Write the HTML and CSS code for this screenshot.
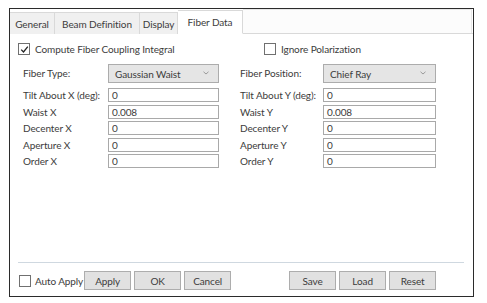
FILE: index.html
```html
<!DOCTYPE html>
<html>
<head>
<meta charset="utf-8">
<link rel="stylesheet" href="styles.css">
</head>
<body>
<div class="window">
  <div class="tabs">
    <div class="tab t-general">General</div>
    <div class="tab t-beam">Beam Definition</div>
    <div class="tab t-display">Display</div>
    <div class="tab active t-fiber">Fiber Data</div>
    <div class="tab-fill"></div>
  </div>
  <div class="content">
    <div class="checks">
      <label class="check c-compute"><span class="box checked"><svg width="9" height="9" viewBox="0 0 9 9"><path d="M1.2 4.6 L3.5 7 L7.8 1.6" fill="none" stroke="#222" stroke-width="1.3"/></svg></span>Compute Fiber Coupling Integral</label>
      <label class="check c-ignore"><span class="box"></span>Ignore Polarization</label>
    </div>
    <div class="fields">
      <div class="lbl">Fiber Type:</div>
      <div class="select">Gaussian Waist<svg class="arrow" width="6" height="4" viewBox="0 0 6 4"><path d="M0.5 0.8 L3 3 L5.5 0.8" fill="none" stroke="#999" stroke-width="1"/></svg></div>
      <div class="lbl r">Fiber Position:</div>
      <div class="select">Chief Ray<svg class="arrow" width="6" height="4" viewBox="0 0 6 4"><path d="M0.5 0.8 L3 3 L5.5 0.8" fill="none" stroke="#999" stroke-width="1"/></svg></div>

      <div class="lbl">Tilt About X (deg):</div><div class="input">0</div>
      <div class="lbl r">Tilt About Y (deg):</div><div class="input">0</div>
      <div class="lbl">Waist X</div><div class="input">0.008</div>
      <div class="lbl r">Waist Y</div><div class="input">0.008</div>
      <div class="lbl">Decenter X</div><div class="input">0</div>
      <div class="lbl r">Decenter Y</div><div class="input">0</div>
      <div class="lbl">Aperture X</div><div class="input">0</div>
      <div class="lbl r">Aperture Y</div><div class="input">0</div>
      <div class="lbl">Order X</div><div class="input">0</div>
      <div class="lbl r">Order Y</div><div class="input">0</div>
    </div>
    <div class="spacer"></div>
    <div class="footer">
      <label class="check auto"><span class="box"></span>Auto Apply</label>
      <div class="btn">Apply</div>
      <div class="btn">OK</div>
      <div class="btn">Cancel</div>
      <div class="gap"></div>
      <div class="btn">Save</div>
      <div class="btn">Load</div>
      <div class="btn">Reset</div>
    </div>
  </div>
</div>
</body>
</html>
```
FILE: styles.css
```css
* { box-sizing: border-box; }
html, body { margin: 0; padding: 0; background: #fff; }
body {
  font-family: Lato, "Noto Sans", sans-serif;
  font-size: 10px;
  letter-spacing: -0.1px;
  color: #3c3c3c;
}
.window {
  margin: 8px 0 0 9px;
  width: 465px;
  height: 289px;
  border: 1px solid #2b2b2b;
  display: flex;
  flex-direction: column;
  background: #fff;
}
.tabs {
  height: 25px;
  display: flex;
  align-items: flex-end;
  border-bottom: 1px solid #d9d9d9;
  background: #fff;
  flex: none;
}
.tab {
  height: 22px;
  background: #f0f0f0;
  border: 1px solid #d9d9d9;
  border-bottom: none;
  border-left: none;
  display: flex;
  align-items: center;
  justify-content: center;
  margin-bottom: -1px;
}
.tab.t-general { width: 45px; }
.tab.t-beam { width: 85px; }
.tab.t-display { width: 38px; }
.tab.active {
  width: 65px;
  height: 24px;
  background: #fff;
  border-bottom: 1px solid #fff;
  padding-bottom: 1px;
}
.tab-fill {
  flex: 1;
  height: 24px;
  border-top: 1px solid #e8e8e8;
  border-right: 1px solid #e8e8e8;
  background: #fcfcfc;
  margin-right: 1px;
}
.content {
  flex: 1;
  display: flex;
  flex-direction: column;
  padding: 9px 8px 6px 8px;
}
.checks {
  display: flex;
  height: 12px;
  align-items: center;
}
.check {
  display: flex;
  align-items: center;
  white-space: nowrap;
}
.box {
  width: 12px;
  height: 12px;
  border: 1px solid #707070;
  background: #fff;
  margin-right: 5px;
  display: flex;
  align-items: center;
  justify-content: center;
  flex: none;
}
.c-compute { width: 246px; }
.fields {
  margin-top: 9px;
  margin-left: 5px;
  display: grid;
  grid-template-columns: 85px 111px 21px 83px 113px;
  grid-template-rows: 21.5px;
  grid-auto-rows: 14px;
  row-gap: 2.5px;
  align-items: center;
}
.fields .lbl { white-space: nowrap; }
.fields .lbl.r { grid-column: 4; }
.fields > :nth-child(-n+4) { align-self: start; }
.fields > .lbl:nth-child(-n+4) { line-height: 19px; }
.select {
  height: 19px;
  background: #e5e5e5;
  border: 1px solid #acacac;
  display: flex;
  align-items: center;
  padding-left: 6px;
  position: relative;
}
.arrow { position: absolute; right: 9px; top: 6px; }
.input {
  height: 14px;
  border: 1px solid #a9a9a9;
  background: #fff;
  padding-left: 3px;
  display: flex;
  align-items: center;
  line-height: 1;
}
.spacer { flex: 1; }
.footer {
  border-top: 1px solid #cfd8e0;
  margin-right: 1px;
  padding-top: 8px;
  display: flex;
  align-items: center;
  height: 28px;
}
.auto { margin-left: 1px; margin-right: 1px; }
.auto .box { margin-right: 4px; }
.btn {
  width: 47px;
  height: 19px;
  background: #e1e1e1;
  border: 1px solid #adadad;
  display: flex;
  align-items: center;
  justify-content: center;
  margin-right: 3px;
}
.gap { width: 55px; }
```
